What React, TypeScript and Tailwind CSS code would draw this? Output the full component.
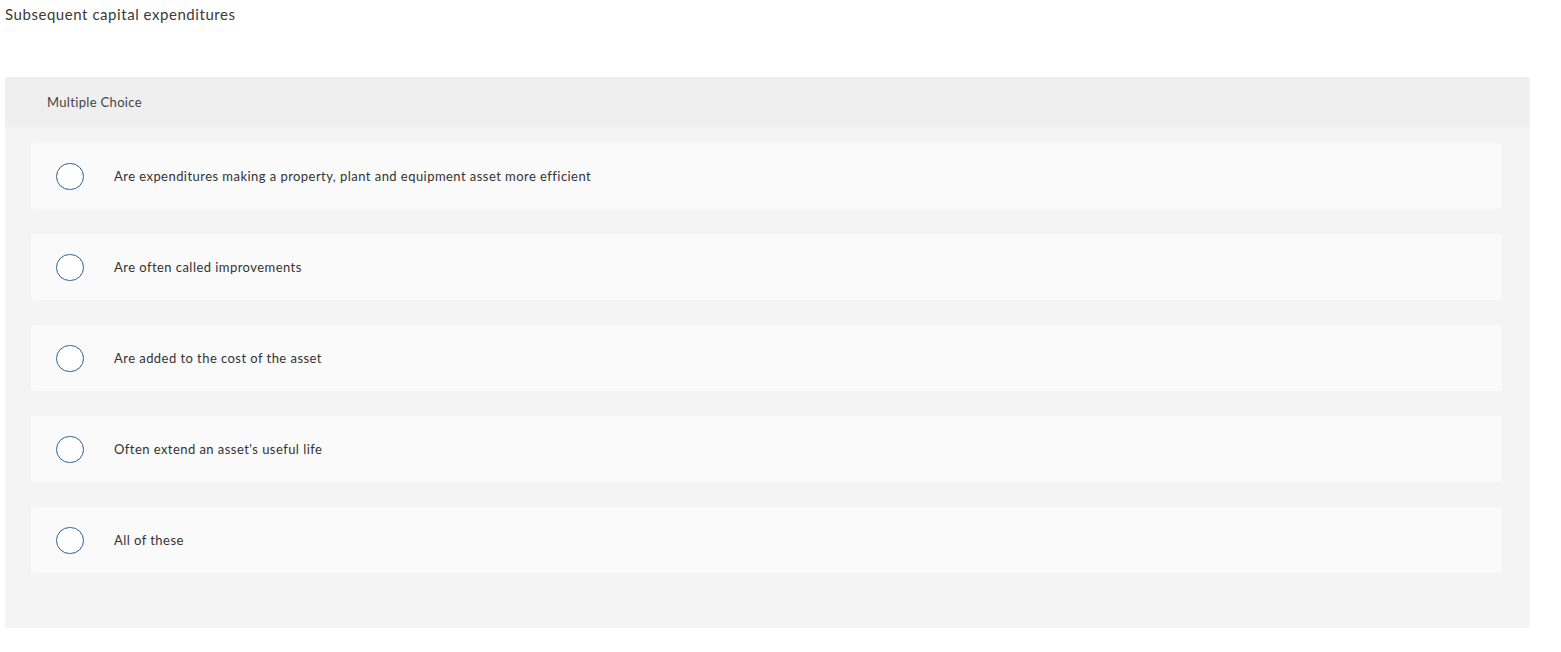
import React from 'react';

const OPTIONS = [
  'Are expenditures making a property, plant and equipment asset more efficient',
  'Are often called improvements',
  'Are added to the cost of the asset',
  "Often extend an asset's useful life",
  'All of these',
];

const App: React.FC = () => {
  return (
    <div className="min-h-[652px] bg-white font-['Lato',sans-serif] text-[#333]">
      <p className="px-[5px] pt-[4px] text-[15px] leading-[20px] tracking-[0.55px] text-[#3a3a3a]">Subsequent capital expenditures</p>

      <div className="mx-[5px] mt-[53px] w-[1525px] rounded-[2px] bg-[#f4f4f4]">
        {/* Header */}
        <div className="flex h-[50px] items-center rounded-t-[2px] bg-[#efefef] pl-[42px] pt-[2px] text-[13px] tracking-[0.33px] text-[#444]">
          Multiple Choice
        </div>

        {/* Choices */}
        <div className="flex flex-col gap-[25px] pb-[55px] pl-[26px] pr-[28px] pt-[16px]">
          {OPTIONS.map((opt) => (
            <div key={opt} className="flex h-[66px] items-center rounded-[3px] bg-[#fafafa]">
              <span className="ml-[25px] h-[27px] w-[28px] shrink-0 rounded-full border-[1.5px] border-[#2d6094] bg-white" />
              <span className="ml-[30px] pt-[2px] text-[13px] tracking-[0.45px] text-[#333]">{opt}</span>
            </div>
          ))}
        </div>
      </div>
    </div>
  );
};

export default App;
